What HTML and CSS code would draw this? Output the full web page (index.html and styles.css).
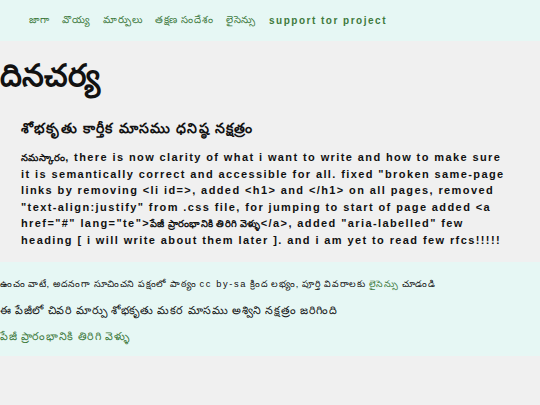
FILE: index.html
```html
<!DOCTYPE html>
<html lang="te">
<head>
<meta charset="utf-8">
<title>దినచర్య</title>
<link rel="stylesheet" href="styles.css">
</head>
<body>
<nav class="topnav">
  <a href="#">జాగా</a>
  <a href="#">వొయ్య</a>
  <a href="#">మార్పులు</a>
  <a href="#">తక్షణ సందేశం</a>
  <a href="#">లైసెన్సు</a>
  <a href="#" class="latin" lang="en">support tor project</a>
</nav>
<main class="content">
  <h1 class="title">దినచర్య</h1>
  <h2 class="subtitle">శోభకృతు కార్తీక మాసము ధనిష్ఠ నక్షత్రం</h2>
  <p class="entry" lang="en"><span class="te" lang="te">నమస్కారం</span>, there is now clarity of what i want to write and how to make sure it is semantically correct and accessible for all. fixed "broken same-page links by removing &lt;li id=&gt;, added &lt;h1&gt; and &lt;/h1&gt; on all pages, removed "text-align:justify" from .css file, for jumping to start of page added &lt;a href="#" lang="te"&gt;<span class="te" lang="te">పేజీ ప్రారంభానికి తిరిగి వెళ్ళు</span>&lt;/a&gt;, added "aria-labelled" few heading [ i will write about them later ]. and i am yet to read few rfcs!!!!!</p>
</main>
<footer class="foot">
  <p class="licence">ఉంచం వాటే, అదనంగా సూచించని పక్షంలో పాఠ్యం <span class="lat" lang="en">cc by-sa</span> క్రింద లభ్యం, పూర్తి వివరాలకు <a href="#">లైసెన్సు</a> చూడండి</p>
  <p>ఈ పేజీలో చివరి మార్పు శోభకృతు మకర మాసము అశ్విని నక్షత్రం జరిగింది</p>
  <p><a href="#">పేజీ ప్రారంభానికి తిరిగి వెళ్ళు</a></p>
</footer>
</body>
</html>
```
FILE: styles.css
```css
html, body {
  margin: 0;
  padding: 0;
}
body {
  background: #f0f0f0;
  color: #111;
  font-family: "Liberation Sans", Arial, sans-serif;
}
.topnav {
  background: #e6f7f4;
  height: 41px;
  display: flex;
  align-items: center;
  gap: 13px;
  padding-left: 29px;
  font-size: 10px;
  letter-spacing: 0.6px;
}
.topnav a {
  color: #3e7a3e;
  text-decoration: none;
}
.topnav .latin {
  font-size: 10px;
  font-weight: bold;
  letter-spacing: 1.5px;
}
.title {
  margin: 15px 0 0 0;
  font-size: 31px;
  font-weight: bold;
  line-height: 40px;
}
.subtitle {
  margin: 22px 0 0 21px;
  font-size: 14px;
  font-weight: bold;
  line-height: 20px;
  letter-spacing: 1.2px;
}
.entry {
  margin: 11px 29px 0 21px;
  text-align: left;
  font-size: 11px;
  font-weight: bold;
  letter-spacing: 1.4px;
  line-height: 16.2px;
}
.entry .te {
  font-size: 9.8px;
  letter-spacing: 0.3px;
}
.foot {
  background: #e6f7f4;
  padding: 15px 0 13px 0;
  margin-top: 14px;
}
.foot p {
  margin: 0 0 12px 0;
  font-size: 11px;
  line-height: 14px;
  letter-spacing: 0.6px;
}
.foot .licence {
  font-size: 9.3px;
}
.foot .lat {
  letter-spacing: 1.6px;
}
.foot p:last-child {
  margin-bottom: 0;
}
.foot a {
  color: #3e7a3e;
  text-decoration: none;
}
```
